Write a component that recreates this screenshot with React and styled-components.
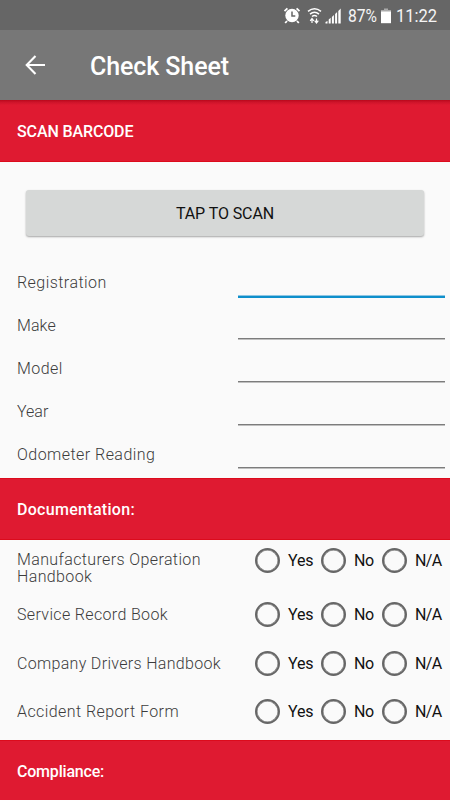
import React from "react";
import styled, { createGlobalStyle } from "styled-components";

const GlobalStyle = createGlobalStyle`
  * { box-sizing: border-box; }
  body { margin: 0; background: #fafafa; }
`;

const Screen = styled.div`
  width: 450px;
  height: 800px;
  overflow: hidden;
  display: flex;
  flex-direction: column;
  background: #fafafa;
  font-family: Roboto, "Liberation Sans", sans-serif;
`;

const StatusBar = styled.div`
  height: 30px;
  flex: none;
  display: flex;
  align-items: center;
  padding: 2px 12px 0 283px;
  background: #666666;
  color: #f5f5f5;
`;

const StatusIcon = styled.svg`
  display: block;
  flex: none;
  margin-right: ${(p) => p.$gap}px;
`;

const StatusText = styled.span`
  width: ${(p) => p.$width}px;
  flex: none;
  font-size: 19px;
  line-height: 24px;
  letter-spacing: 0;
  white-space: nowrap;
  transform: scaleX(${(p) => p.$stretch});
  transform-origin: left center;
`;

const AppBar = styled.header`
  height: 70px;
  flex: none;
  display: flex;
  align-items: center;
  padding: 0 0 0 25px;
  background: #777777;
  color: #fff;
`;

const BackButton = styled.button`
  display: flex;
  width: 65px;
  padding: 0;
  border: 0;
  background: none;
  color: inherit;
`;

const Title = styled.h1`
  margin: 0;
  padding-top: 3px;
  font-size: 25px;
  font-weight: 500;
  line-height: 30px;
  letter-spacing: -0.1px;
`;

const SectionHeader = styled.h2`
  height: 62px;
  flex: none;
  display: flex;
  align-items: center;
  margin: 0;
  padding: 2px 17px 0;
  background: ${(p) =>
    p.$raised
      ? "linear-gradient(#b9081b, #cc1329 2px, #df1a31 5px)"
      : "#df1a31"};
  border-top: ${(p) => (p.$raised ? "0" : "1px solid #dc0b1c")};
  border-bottom: 1px solid #dc0b1c;
  color: #fff;
  font-size: 16px;
  font-weight: 500;
  line-height: 20px;
  letter-spacing: ${(p) => p.$tracking}px;
`;

const ScanArea = styled.div`
  height: 99px;
  flex: none;
  padding: 28px 26px 0;
`;

const ScanButton = styled.button`
  display: block;
  width: 398px;
  height: 46px;
  padding: 0;
  border: 0;
  border-radius: 3px;
  background: #d6d8d7;
  box-shadow: 0 1px 2px rgba(0, 0, 0, 0.34);
  color: #111;
  font-family: inherit;
  font-size: 16px;
  letter-spacing: -0.1px;
`;

const Fields = styled.div`
  height: 217px;
  flex: none;
`;

const FieldRow = styled.label`
  height: 43px;
  display: grid;
  grid-template-columns: 221px 207px;
  padding-left: 17px;
`;

const Label = styled.span`
  color: #3c3c3c;
  font-size: 16px;
  font-weight: 300;
  line-height: 17px;
  letter-spacing: ${(p) => p.$tracking}px;
  white-space: pre-line;
`;

const FieldLabel = styled(Label)`
  padding-top: 13px;
`;

const Input = styled.input`
  width: 207px;
  height: ${(p) => (p.$active ? 37 : 35)}px;
  padding: 0;
  border: 0;
  border-bottom: ${(p) => (p.$active ? "2px solid #0e8fcb" : "1px solid #7c7c7c")};
  border-radius: 0;
  outline: 0;
  background: ${(p) =>
    p.$active ? "linear-gradient(#8fc6e3, #8fc6e3) bottom / 100% 1px no-repeat" : "transparent"};
  box-shadow: ${(p) => (p.$active ? "none" : "0 1px 0 #bfbfbf")};
`;

const CheckRow = styled.div`
  height: ${(p) => p.$height}px;
  flex: none;
  display: grid;
  grid-template-columns: 238px 66px 61px 60px;
  padding: 8px 0 0 17px;
`;

const CheckLabel = styled(Label)`
  padding-top: ${(p) => p.$top}px;
`;

const Option = styled.label`
  height: 25px;
  display: flex;
  align-items: center;
  gap: 8px;
  color: #111;
  font-size: 16px;
  letter-spacing: ${(p) => p.$tracking}px;
`;

const Radio = styled.input`
  appearance: none;
  width: 25px;
  height: 25px;
  flex: none;
  margin: 0;
  border: 2px solid #666;
  box-shadow: inset 0 0 0 0.5px #777;
  border-radius: 50%;
`;

const fields = [
  { name: "Registration", tracking: 0.45 },
  { name: "Make", tracking: 0.1 },
  { name: "Model", tracking: 0.45 },
  { name: "Year", tracking: 0 },
  { name: "Odometer Reading", tracking: 0.46 },
];

const checks = [
  { name: "Manufacturers Operation\nHandbook", tracking: 0.38, height: 54, top: 3 },
  { name: "Service Record Book", tracking: 0.35, height: 49, top: 4 },
  { name: "Company Drivers Handbook", tracking: 0.32, height: 48, top: 4 },
  { name: "Accident Report Form", tracking: 0.42, height: 49, top: 4 },
];

const options = [
  { name: "Yes", tracking: -0.2 },
  { name: "No", tracking: -0.3 },
  { name: "N/A", tracking: -0.6 },
];

function AlarmIcon() {
  return (
    <StatusIcon width="18" height="18" viewBox="0 0 18 18" $gap={6}>
      <circle cx="9" cy="8.5" r="6.7" fill="#fff" />
      <path d="M1.5 4.2 4.4 1.4M16.5 4.2l-2.9-2.8M4 14l-1.8 2M14 14l1.8 2" stroke="#fff" strokeWidth="1.8" fill="none" />
      <path d="M9 4.5V9h3.3" stroke="#666" strokeWidth="1.5" fill="none" />
    </StatusIcon>
  );
}

function WifiIcon() {
  return (
    <StatusIcon width="15" height="18" viewBox="0 0 15 18" $gap={3}>
      <path d="M1 4.4Q7.5-.9 14 4.4M3 7.1q4.5-3.8 9 0M5 9.5q2.5-2.1 5 0" stroke="#fff" strokeWidth="1.5" fill="none" />
      <path d="M5 16v-4M3.2 13.8 5 11.5l1.8 2.3M9.5 11.5v4M7.7 13.7l1.8 2.3 1.8-2.3" stroke="#fff" strokeWidth="1.2" fill="none" />
    </StatusIcon>
  );
}

function SignalIcon() {
  return (
    <StatusIcon width="17" height="16" viewBox="0 0 16 16" $gap={6}>
      <path d="M0 15.5V14l2-1v2.5zM3.2 15.5v-4l2-1.7v5.7zM6.4 15.5V9l2-2v8.5zM9.6 15.5V6l2-2v11.5zM12.8 15.5V3l2.4-2.5v15z" fill="#fff" />
    </StatusIcon>
  );
}

function BatteryIcon() {
  return (
    <StatusIcon width="10" height="16" viewBox="0 0 10 16" $gap={5}>
      <path d="M3 .5h4v1.7H3zM0 2h10v2H0z" fill="#aaa" />
      <path d="M0 3.5h10v11.7H0z" fill="#fff" />
    </StatusIcon>
  );
}

export default function App() {
  return (
    <Screen>
      <GlobalStyle />
      <StatusBar>
        <AlarmIcon />
        <WifiIcon />
        <SignalIcon />
        <StatusText $width={33} $stretch={0.82}>87%</StatusText>
        <BatteryIcon />
        <StatusText $width={42} $stretch={0.87}>11:22</StatusText>
      </StatusBar>
      <AppBar>
        <BackButton aria-label="Back">
          <svg width="21" height="20" viewBox="0 0 21 20" fill="none" stroke="currentColor" strokeWidth="2.1">
            <path d="M20 10H2M10.5 1 1.7 10l8.8 9" />
          </svg>
        </BackButton>
        <Title>Check Sheet</Title>
      </AppBar>
      <SectionHeader $raised $tracking={-0.12}>SCAN BARCODE</SectionHeader>
      <ScanArea>
        <ScanButton>TAP TO SCAN</ScanButton>
      </ScanArea>
      <Fields>
        {fields.map((field, i) => (
          <FieldRow key={field.name}>
            <FieldLabel $tracking={field.tracking}>{field.name}</FieldLabel>
            <Input $active={i === 0} />
          </FieldRow>
        ))}
      </Fields>
      <SectionHeader $tracking={0.3}>Documentation:</SectionHeader>
      {checks.map((check) => (
        <CheckRow key={check.name} $height={check.height}>
          <CheckLabel $tracking={check.tracking} $top={check.top}>{check.name}</CheckLabel>
          {options.map((option) => (
            <Option key={option.name} $tracking={option.tracking}>
              <Radio type="radio" name={check.name} />
              {option.name}
            </Option>
          ))}
        </CheckRow>
      ))}
      <SectionHeader $tracking={-0.2}>Compliance:</SectionHeader>
    </Screen>
  );
}
